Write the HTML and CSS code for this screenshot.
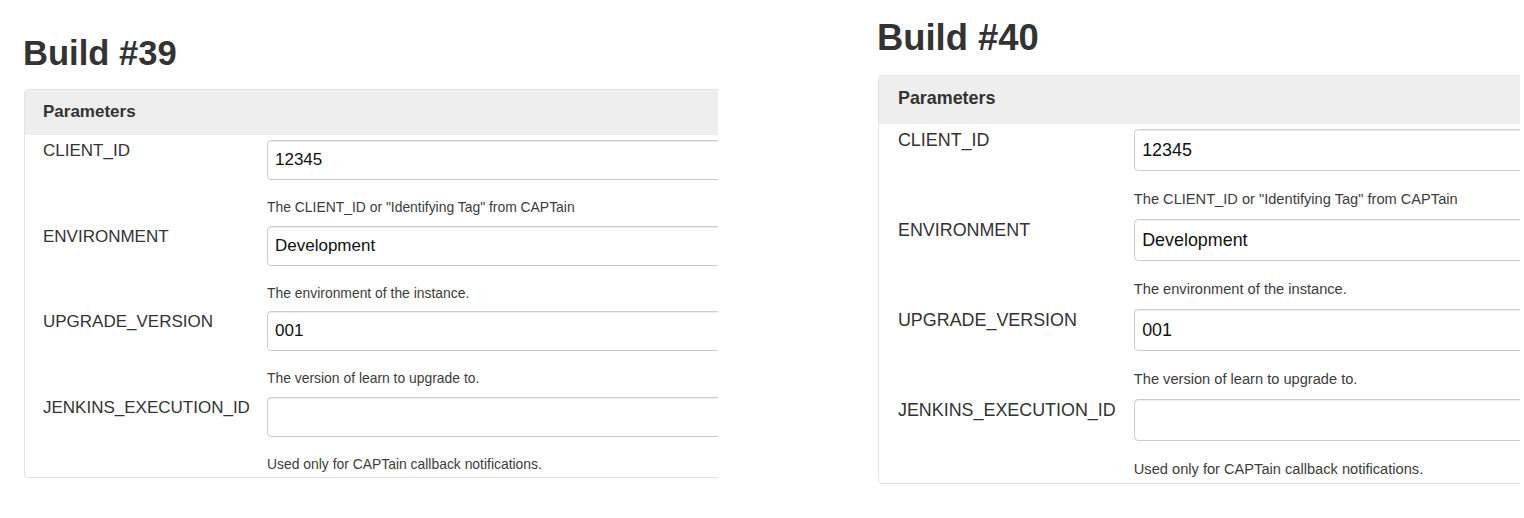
FILE: index.html
```html
<!DOCTYPE html>
<html lang="en">
<head>
<meta charset="utf-8">
<title>Builds</title>
<link rel="stylesheet" href="styles.css">
</head>
<body>
<div class="page">
  <section class="col col-left">
    <div class="build">
      <h1 class="build-title">Build #39</h1>
      <div class="panel">
        <div class="panel-heading">Parameters</div>
        <div class="panel-body">
          <div class="param">
            <div class="param-name">CLIENT_ID</div>
            <div class="param-field">
              <input class="param-input" type="text" value="12345">
              <div class="param-desc">The CLIENT_ID or "Identifying Tag" from CAPTain</div>
            </div>
          </div>
          <div class="param">
            <div class="param-name">ENVIRONMENT</div>
            <div class="param-field">
              <input class="param-input" type="text" value="Development">
              <div class="param-desc">The environment of the instance.</div>
            </div>
          </div>
          <div class="param">
            <div class="param-name">UPGRADE_VERSION</div>
            <div class="param-field">
              <input class="param-input" type="text" value="001">
              <div class="param-desc">The version of learn to upgrade to.</div>
            </div>
          </div>
          <div class="param">
            <div class="param-name">JENKINS_EXECUTION_ID</div>
            <div class="param-field">
              <input class="param-input" type="text" value="">
              <div class="param-desc">Used only for CAPTain callback notifications.</div>
            </div>
          </div>
        </div>
      </div>
    </div>
  </section>
  <section class="col col-right">
    <div class="build build-zoomed">
      <h1 class="build-title">Build #40</h1>
      <div class="panel">
        <div class="panel-heading">Parameters</div>
        <div class="panel-body">
          <div class="param">
            <div class="param-name">CLIENT_ID</div>
            <div class="param-field">
              <input class="param-input" type="text" value="12345">
              <div class="param-desc">The CLIENT_ID or "Identifying Tag" from CAPTain</div>
            </div>
          </div>
          <div class="param">
            <div class="param-name">ENVIRONMENT</div>
            <div class="param-field">
              <input class="param-input" type="text" value="Development">
              <div class="param-desc">The environment of the instance.</div>
            </div>
          </div>
          <div class="param">
            <div class="param-name">UPGRADE_VERSION</div>
            <div class="param-field">
              <input class="param-input" type="text" value="001">
              <div class="param-desc">The version of learn to upgrade to.</div>
            </div>
          </div>
          <div class="param">
            <div class="param-name">JENKINS_EXECUTION_ID</div>
            <div class="param-field">
              <input class="param-input" type="text" value="">
              <div class="param-desc">Used only for CAPTain callback notifications.</div>
            </div>
          </div>
        </div>
      </div>
    </div>
  </section>
</div>
</body>
</html>
```
FILE: styles.css
```css
html, body {
  margin: 0;
  background: #fff;
}

body {
  font-family: "Liberation Sans", Arial, Helvetica, sans-serif;
  color: #333;
}

.page {
  display: flex;
  align-items: flex-start;
}

.col {
  flex: none;
  overflow: hidden;
}

.col-left {
  margin-left: 24px;
  width: 694px;
  padding-top: 33px;
}

.col-right {
  margin-left: 160px;
  width: 642px;
  padding-top: 16.5px;
}

.build-zoomed {
  zoom: 1.053;
}

.build-title {
  margin: 0 0 16px -1px;
  font-size: 34.6px;
  font-weight: bold;
  line-height: 40px;
  color: #333;
}

.panel {
  width: 1000px;
  border: 1px solid #e3e3e3;
  border-radius: 4px;
  background: #fff;
}

.panel-heading {
  height: 45px;
  line-height: 43px;
  padding-left: 18px;
  background: #eeeeee;
  border-radius: 3px 3px 0 0;
  font-size: 17px;
  font-weight: bold;
  color: #333;
}

.panel-body {
  display: flex;
  flex-direction: column;
  gap: 8.5px;
  padding: 5px 0 3px 18px;
}

.param {
  display: grid;
  grid-template-columns: 224px 1fr;
}

.param-name {
  padding-top: 1px;
  font-size: 17px;
  line-height: 20px;
  color: #333;
}

.param-input {
  display: block;
  box-sizing: border-box;
  width: 100%;
  height: 40px;
  margin: 0;
  padding: 0 7px;
  border: 1px solid #cccccc;
  border-radius: 4px;
  box-shadow: inset 0 1px 1px rgba(0, 0, 0, 0.075);
  background: #fff;
  font-family: "Liberation Sans", Arial, Helvetica, sans-serif;
  font-size: 17px;
  color: #111;
  outline: none;
}

.param-desc {
  margin-top: 17px;
  font-size: 13.9px;
  line-height: 20px;
  color: #3c3c3c;
}
```
